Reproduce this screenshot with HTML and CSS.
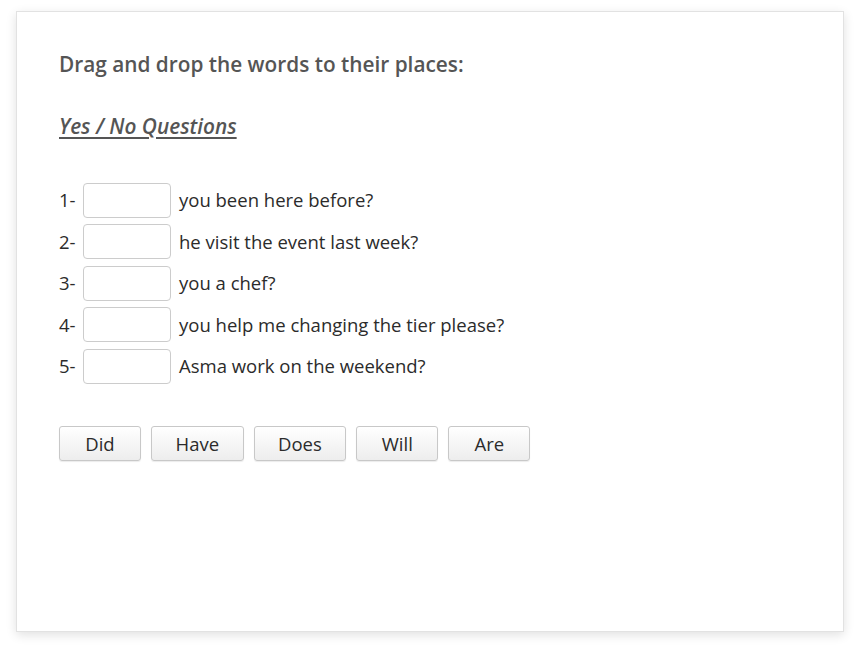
FILE: index.html
```html
<!DOCTYPE html>
<html>
<head>
<meta charset="utf-8">
<link rel="stylesheet" href="styles.css">
</head>
<body>
<div class="card">
  <h1 class="title">Drag and drop the words to their places:</h1>
  <h2 class="subtitle">Yes / No Questions</h2>
  <div class="rows">
    <div class="row"><span class="num">1-</span><span class="slot"></span><span class="text">you been here before?</span></div>
    <div class="row"><span class="num">2-</span><span class="slot"></span><span class="text">he visit the event last week?</span></div>
    <div class="row"><span class="num">3-</span><span class="slot"></span><span class="text">you a chef?</span></div>
    <div class="row"><span class="num">4-</span><span class="slot"></span><span class="text">you help me changing the tier please?</span></div>
    <div class="row"><span class="num">5-</span><span class="slot"></span><span class="text">Asma work on the weekend?</span></div>
  </div>
  <div class="words">
    <button class="word">Did</button>
    <button class="word">Have</button>
    <button class="word">Does</button>
    <button class="word">Will</button>
    <button class="word">Are</button>
  </div>
</div>
</body>
</html>
```

FILE: styles.css
```css
html, body {
  margin: 0;
  padding: 0;
  background: #ffffff;
}
body {
  padding: 11px 17px 21px 16px;
  font-family: "Open Sans", "DejaVu Sans", sans-serif;
}
.card {
  box-sizing: border-box;
  width: 828px;
  height: 621px;
  background: #fff;
  border: 1px solid #e2e2e2;
  box-shadow: 0 3px 10px rgba(0, 0, 0, 0.12);
  padding: 38px 42px;
}
.title {
  margin: 0;
  font-size: 20.8px;
  font-weight: 600;
  color: #555555;
  line-height: 28px;
}
.subtitle {
  margin: 34px 0 0;
  font-size: 20.8px;
  font-weight: 600;
  font-style: italic;
  text-decoration: underline;
  text-underline-offset: 3px;
  color: #555555;
  line-height: 28px;
}
.rows {
  margin-top: 43px;
  display: flex;
  flex-direction: column;
  gap: 7.5px;
}
.row {
  display: flex;
  align-items: center;
  height: 34px;
  font-size: 18.5px;
  line-height: 32px;
  color: #2b2b2b;
}
.num {
  width: 24px;
}
.slot {
  box-sizing: border-box;
  width: 88px;
  height: 35px;
  border: 1px solid #cccccc;
  border-radius: 4px;
  background: #fff;
  margin-right: 8px;
}
.words {
  margin-top: 43px;
  display: flex;
  gap: 10px;
}
.word {
  box-sizing: border-box;
  min-width: 82px;
  height: 35px;
  padding: 0 23.5px;
  font-family: "Open Sans", "DejaVu Sans", sans-serif;
  font-size: 18.5px;
  color: #2b2b2b;
  background: linear-gradient(#ffffff, #ededed);
  border: 1px solid #c8c8c8;
  border-radius: 3px;
  box-shadow: 0 1px 1px rgba(0,0,0,0.08);
}
```
